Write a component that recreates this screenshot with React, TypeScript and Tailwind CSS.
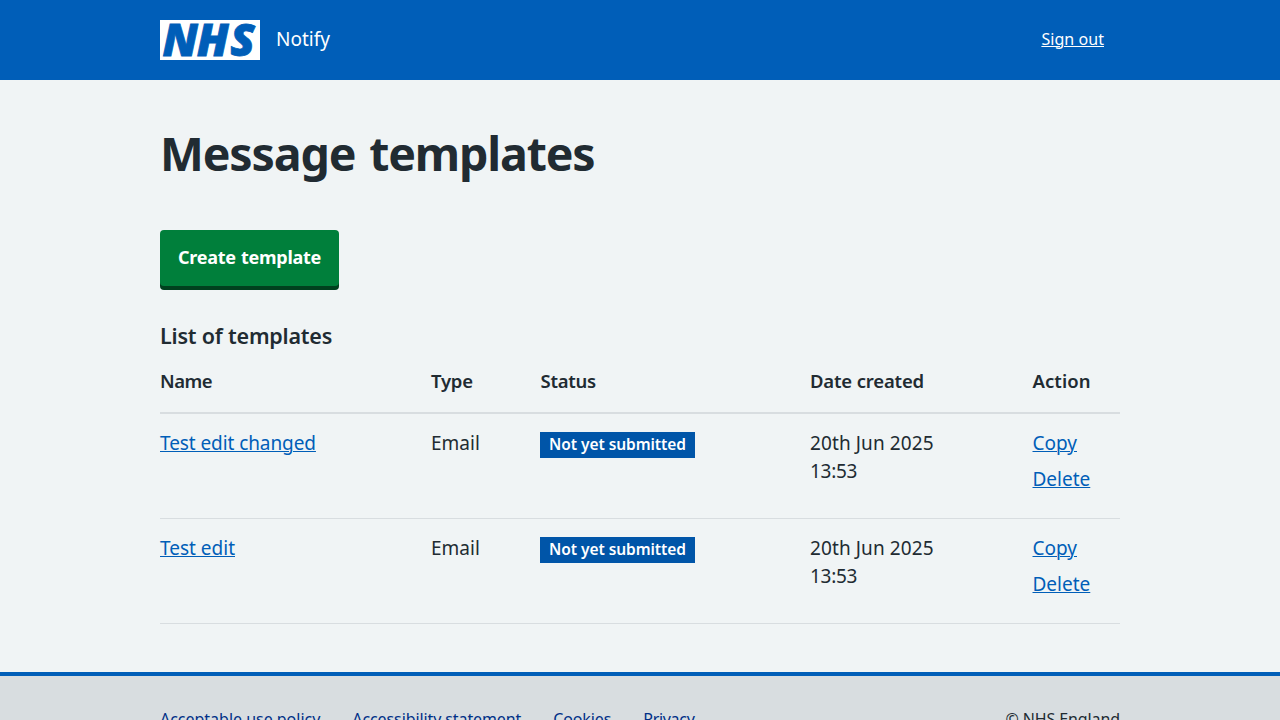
type Template = { name: string; nameClass: string; type: string; status: string; date: string; time: string };

const templates: Template[] = [
  { name: "Test edit changed", nameClass: "tracking-[-0.08px]", type: "Email", status: "Not yet submitted", date: "20th Jun 2025", time: "13:53" },
  { name: "Test edit", nameClass: "", type: "Email", status: "Not yet submitted", date: "20th Jun 2025", time: "13:53" },
];

function NhsLogo() {
  return (
    <svg width="100" height="40" viewBox="0 0 100 40" role="img" aria-label="NHS" className="block overflow-visible">
      <rect width="100" height="40" fill="#fff" />
      <text
        y="35.9"
        fill="#005eb8"
        stroke="#005eb8"
        strokeWidth="0.8"
        fontFamily="'Noto Sans', sans-serif"
        fontSize="44.8"
        fontStyle="italic"
        fontWeight="900"
      >
        <tspan x="2.4">N</tspan>
        <tspan x="36.8">H</tspan>
        <tspan x="70.3">S</tspan>
      </text>
    </svg>
  );
}

function Header() {
  return (
    <header className="h-20 shrink-0 bg-[#005eb8] text-white">
      <div className="mx-auto flex h-full w-[960px] items-center">
        <a className="flex items-center gap-4">
          <NhsLogo />
          <span className="pb-[2px] text-[19px] leading-7">Notify</span>
        </a>
        <a className="ml-auto mr-4 pb-[2px] text-base leading-6 tracking-[0.06px] underline decoration-1 underline-offset-[1px]">Sign out</a>
      </div>
    </header>
  );
}

const link = "text-[#005eb8] underline decoration-1 underline-offset-[1px]";
const columns = "grid grid-cols-[271px_109px_270px_222.5px_87.5px]";

function TemplateTable() {
  return (
    <section>
      <h2 className="text-[21.5px] font-semibold leading-7 tracking-[-0.2px]">List of templates</h2>
      <div className={`${columns} mt-[17px] h-[47px] border-b-2 border-[#d8dde0] text-[18.5px] font-semibold leading-7`}>
        <span className="tracking-[-0.5px]">Name</span>
        <span className="tracking-[-0.25px]">Type</span>
        <span className="pl-[0.5px] tracking-[-0.25px]">Status</span>
        <span className="tracking-[-0.17px]">Date created</span>
        <span className="tracking-[0.05px]">Action</span>
      </div>
      {templates.map((t) => (
        <div key={t.name} className={`${columns} h-[105px] border-b border-[#d8dde0] pt-[15px] text-[19px] leading-7`}>
          <div><a className={`${link} ${t.nameClass}`}>{t.name}</a></div>
          <div>{t.type}</div>
          <div className="pt-[3px]">
            <span className="flex h-[26px] w-[155px] items-center justify-center bg-[#0055a8] pb-[2px] text-[15.5px] font-semibold leading-5 tracking-[-0.06px] text-white">
              {t.status}
            </span>
          </div>
          <div className="flex flex-col">
            <span className="tracking-[0.1px]">{t.date}</span>
            <span className="tracking-[-0.3px]">{t.time}</span>
          </div>
          <div className="flex flex-col items-start gap-2">
            <a className={link}>Copy</a>
            <a className={link}>Delete</a>
          </div>
        </div>
      ))}
    </section>
  );
}

function Footer() {
  return (
    <footer className="mt-12 flex-1 border-t-4 border-[#005eb8] bg-[#d8dde0]">
      <div className="mx-auto flex w-[960px] justify-between pt-[31px] text-base leading-6">
        <nav className="flex gap-8 text-[#003087]">
          <a className="tracking-[-0.02px]">Acceptable use policy</a>
          <a className="tracking-[-0.1px]">Accessibility statement</a>
          <a className="tracking-[-0.12px]">Cookies</a>
          <a className="tracking-[-0.3px]">Privacy</a>
        </nav>
        <p className="tracking-[-0.1px]">© NHS England</p>
      </div>
    </footer>
  );
}

export default function App() {
  return (
    <div className="flex h-[720px] flex-col overflow-hidden bg-[#f0f4f5] font-['Noto_Sans',sans-serif] text-[#212b32]">
      <Header />
      <main className="mx-auto w-[960px] shrink-0 pt-[47px]">
        <h1 className="text-[46.5px] font-bold leading-[52px] tracking-[-1.15px] [word-spacing:3px]">Message templates</h1>
        <button className="mb-8 mt-[51px] flex h-14 w-[179px] items-center justify-center rounded bg-[#007f3b] pb-[2px] text-[18px] font-bold tracking-[-0.28px] text-white shadow-[0_4px_0_#00401e] [word-spacing:1px]">
          Create template
        </button>
        <div className="pt-[4px]">
          <TemplateTable />
        </div>
      </main>
      <Footer />
    </div>
  );
}
